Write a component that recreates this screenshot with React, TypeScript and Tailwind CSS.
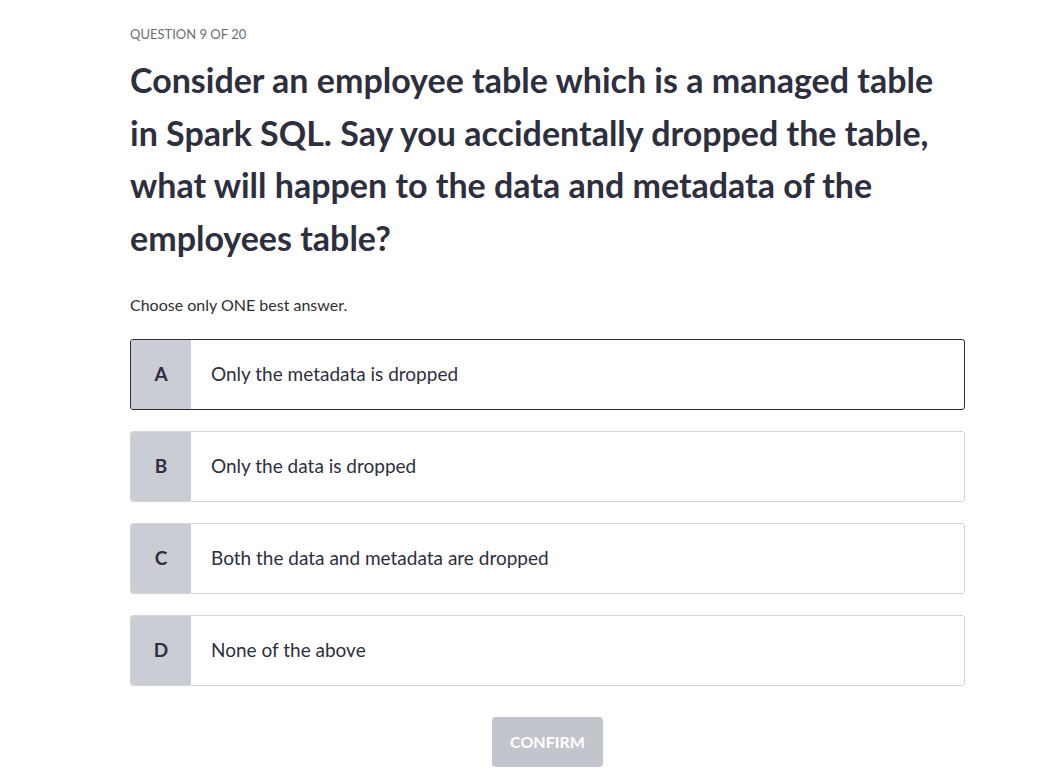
const options = [
  { letter: 'A', text: 'Only the metadata is dropped', selected: true },
  { letter: 'B', text: 'Only the data is dropped', selected: false },
  { letter: 'C', text: 'Both the data and metadata are dropped', selected: false },
  { letter: 'D', text: 'None of the above', selected: false },
];

export default function App() {
  return (
    <div className="min-h-screen bg-white font-['Lato','Liberation_Sans',sans-serif] text-[#2d2f3e]">
      <div className="w-[835px] ml-[130px] pt-[26px]">
        <p className="text-[13px] leading-4 text-[#6a6f73] uppercase">Question 9 of 20</p>

        <h1 className="mt-[12px] text-[34px] leading-[52.5px] font-bold max-w-[820px]">
          Consider an employee table which is a managed table in Spark SQL. Say you accidentally dropped the table,
          what will happen to the data and metadata of the employees table?
        </h1>

        <p className="mt-[31px] text-[16px] leading-5 text-[#2d2f31]">Choose only ONE best answer.</p>

        <div className="mt-[24px] flex flex-col gap-[21px]">
          {options.map((o) => (
            <div
              key={o.letter}
              className={`flex h-[71px] rounded-[3px] border overflow-hidden ${
                o.selected ? 'border-[#2d2f31]' : 'border-[#d1d4db]'
              }`}
            >
              <div className="w-[60px] shrink-0 bg-[#cbcdd5] flex items-center justify-center text-[19px] font-bold">
                {o.letter}
              </div>
              <div className="flex items-center pl-[20px] text-[19px]">{o.text}</div>
            </div>
          ))}
        </div>

        <div className="mt-[31px] flex justify-center">
          <button className="w-[111px] h-[50px] rounded-[4px] bg-[#c3c5cc] text-white text-[16px] font-bold uppercase">
            Confirm
          </button>
        </div>
      </div>
    </div>
  );
}
